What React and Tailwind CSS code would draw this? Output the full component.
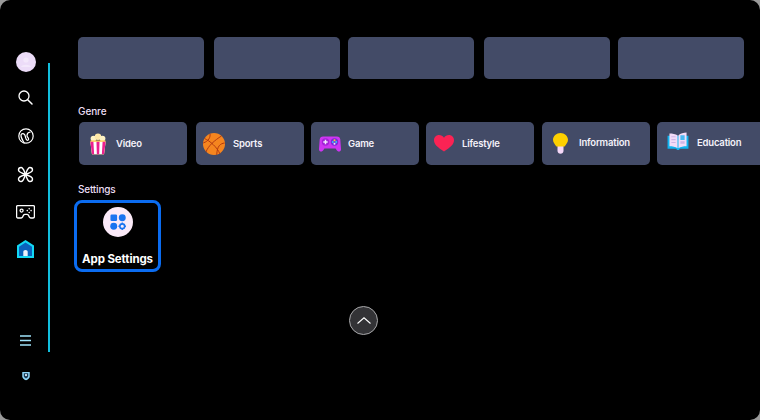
const topCards = ['w-[126px] mr-[10px]', 'w-[126px] mr-[8px]', 'w-[126px] mr-[10px]', 'w-[126px] mr-[8px]', 'w-[126px]'];

const Avatar = () => (
  <svg width="20" height="20" viewBox="0 0 20 20">
    <circle cx="10" cy="10" r="10" fill="#ecdcf8" />
    <circle cx="10" cy="8" r="2.6" fill="#f3e8fb" />
    <path d="M5 15c1-3 9-3 10 0z" fill="#f3e8fb" />
  </svg>
);

const SearchIcon = () => (
  <svg width="15" height="15" viewBox="0 0 15 15" fill="none" stroke="#fff" strokeWidth="1.3" strokeLinecap="round">
    <circle cx="6" cy="6" r="5" />
    <path d="M9.700 9.700 14 14" strokeWidth="1.500" />
  </svg>
);

const GlobeIcon = () => (
  <svg width="16" height="16" viewBox="0 0 16 16" fill="none" stroke="#fff" strokeWidth="1.200" strokeLinecap="round">
    <circle cx="8" cy="8" r="7.200" />
    <path d="M6.200 15C4.600 12 2.600 9.500 3 7c.4-1.800 2.600-1.800 3.600-.3C7.700 8.300 7.500 11 8.800 12c1.200.8 2.300-.4 1.600-1.700-.6-1.100-1.400-1.500-1.400-2.900 0-1.800 1.700-3.200 3.200-3.400" />
  </svg>
);

const FlowerIcon = () => (
  <svg width="17" height="17" viewBox="0 0 18 18" fill="none" stroke="#fff" strokeWidth="1.500" strokeLinejoin="round">
    <path d="M9 9C7.600 5.500 6.800 1.600 4.300 1.600 2.600 1.600 1.600 2.800 1.600 4.300 1.600 6.800 5.500 7.600 9 9Z" />
    <path d="M9 9c1.400-3.500 2.200-7.400 4.700-7.400 1.700 0 2.700 1.200 2.700 2.700C16.400 6.800 12.500 7.600 9 9Z" />
    <path d="M9 9c-1.400 3.500-2.200 7.400-4.700 7.400-1.700 0-2.700-1.200-2.700-2.700C1.600 11.200 5.500 10.400 9 9Z" />
    <path d="M9 9c1.400 3.500 2.200 7.400 4.700 7.400 1.700 0 2.700-1.200 2.700-2.700C16.400 11.200 12.500 10.400 9 9Z" />
  </svg>
);

const GamepadIcon = () => (
  <svg width="19" height="14" viewBox="0 0 19 14" fill="none" stroke="#fff" strokeWidth="1.300" strokeLinejoin="round">
    <path d="M1.600.7h15.800c.6 0 1 .4 1 1v9.900c0 .8-.5 1.400-1.300 1.400h-2.400c-.6 0-1-.3-1.300-.8l-1-2.100c-.3-.5-.8-.8-1.400-.8H8.900c-.6 0-1.100.3-1.400.8l-1 2.100c-.3.5-.7.8-1.300.8H1.900C1.100 13 .6 12.400.6 11.600V1.700c0-.6.4-1 1-1Z" />
    <circle cx="5.600" cy="5.600" r="1.500" />
    <g fill="#fff" stroke="none">
      <circle cx="13.200" cy="3.700" r=".8" />
      <circle cx="13.200" cy="7.500" r=".8" />
      <circle cx="11.300" cy="5.600" r=".8" />
      <circle cx="15.100" cy="5.600" r=".8" />
    </g>
  </svg>
);

const HomeIcon = () => (
  <svg width="17" height="18" viewBox="0 0 17 18">
    <path d="M8.500 0 17 5.500V18H0V5.500Z" fill="#12d8f5" />
    <path d="M8.500 2.500 15 6.700V16H2V6.700Z" fill="#0b62bd" />
    <path d="M6.300 16v-4.200c0-1 1-1.800 2.200-1.800s2.200.8 2.200 1.800V16Z" fill="#eef2fb" />
  </svg>
);

const MenuIcon = () => (
  <svg width="11" height="11" viewBox="0 0 11 11" stroke="#a0e4fa" strokeWidth="1.300" className="block">
    <path d="M0 1h11M0 5.500h11M0 10h11" />
  </svg>
);

const ShieldIcon = () => (
  <svg width="8" height="10" viewBox="0 0 9 10" className="block">
    <path d="M.3.600h8.400v4.600c0 2.400-2.200 3.800-4.200 4.500C2.500 9 .3 7.600.3 5.200Z" fill="#8fd6f8" />
    <path d="M2 2h5v3c0 1.400-1.300 2.300-2.500 2.800C3.300 7.300 2 6.400 2 5Z" fill="#1a3a55" />
    <circle cx="4.500" cy="4" r="1.200" fill="#e8f6ff" />
  </svg>
);

const Popcorn = () => (
  <svg width="18" height="22" viewBox="0 0 20 24">
    <circle cx="5" cy="6" r="3.200" fill="#fff3c4" />
    <circle cx="10" cy="4" r="3.600" fill="#ffe9a8" />
    <circle cx="15" cy="6" r="3.200" fill="#fff3c4" />
    <path d="M1.500 8h17l-1.800 15.500H3.300Z" fill="#ffcb3d" />
    <path d="M1.500 9.500h17l-1.800 14H3.300Z" fill="#fff" />
    <path d="M1.500 9.500h3.400l.8 14H3.300ZM8.300 9.500h3.400l-.4 14H8.700ZM15.100 9.500h3.400l-1.800 14h-2.400Z" fill="#ec1f8e" />
  </svg>
);

const Basketball = () => (
  <svg width="22" height="22" viewBox="0 0 22 22" fill="none">
    <circle cx="11" cy="11" r="11" fill="#f5851f" />
    <g stroke="#b23a12" strokeWidth="1">
      <path d="M1.500 5.500C7 8 14 14 17 21" />
      <path d="M18.500 3C12 7 5 13 3 19" />
      <path d="M7 .8C7.500 4 6 8 .2 10" />
      <path d="M21.700 10c-4.500.5-7.500 3-8 11.800" />
    </g>
  </svg>
);

const GameIcon = () => (
  <svg width="22" height="16" viewBox="0 0 22 16">
    <path d="M4 .5h14c2 0 3 1.200 3.300 3L22 13c.1 1.800-1 2.500-2 2.500-1.200 0-1.800-.6-2.600-1.800l-.8-1.200H5.400l-.8 1.200C3.800 14.900 3.200 15.500 2 15.500c-1 0-2.100-.7-2-2.500l.7-9.500C1 1.700 2 .5 4 .5Z" fill="#cf35f2" />
    <circle cx="6.500" cy="6" r="3.700" fill="#a322d6" />
    <circle cx="15.500" cy="6" r="3.700" fill="#7b2bd6" />
    <path d="M6.500 3.800v4.400M4.300 6h4.400" stroke="#f3e6ff" strokeWidth="1.400" />
    <circle cx="15.500" cy="4.300" r="1" fill="#ffd21f" />
    <circle cx="13.800" cy="6" r="1" fill="#35c7f5" />
    <circle cx="17.200" cy="6" r="1" fill="#35c7f5" />
    <circle cx="15.500" cy="7.700" r="1" fill="#f3e6ff" />
  </svg>
);

const Heart = () => (
  <svg width="20" height="17" viewBox="0 0 20 17">
    <path d="M10 16.500C4 12.500 0 9.500 0 5.200 0 2.200 2.300 0 5 0c2.200 0 3.800 1 5 2.700C11.200 1 12.800 0 15 0c2.700 0 5 2.200 5 5.200 0 4.300-4 7.300-10 11.300Z" fill="#fb2354" />
  </svg>
);

const Bulb = () => (
  <svg width="15" height="21" viewBox="0 0 15 21">
    <path d="M4.500 13h6v5c0 1.600-1.300 2.800-3 2.800s-3-1.200-3-2.800Z" fill="#f5d8f8" />
    <path d="M7.500 0C11.600 0 15 3 15 6.800c0 2.900-2 4.500-3.400 6.700H3.400C2 11.300 0 9.700 0 6.800 0 3 3.400 0 7.500 0Z" fill="#fdd000" />
  </svg>
);

const Book = () => (
  <svg width="22" height="19" viewBox="0 0 22 20">
    <path d="M0 4h22v13.500h-9l-1 1.500h-2l-1-1.500H0Z" fill="#10b4f0" />
    <path d="M2 1.500c3 0 6.500.4 8.500 2V17C8.500 15.500 5 15 2 15Z" fill="#f2dcf8" />
    <path d="M20 .5c-3 0-6.500 1-8.500 3V17c2-1.500 5.500-2 8.500-2Z" fill="#f2dcf8" />
    <path d="M13.500 3.500H18v5h-4.500Z" fill="#48b8f2" />
    <path d="M4 5h4.500M4 8h4.500M4 11h4.500" stroke="#cfb6e6" strokeWidth="1.200" />
    <path d="M13.500 11h4.500" stroke="#cfb6e6" strokeWidth="2.500" />
  </svg>
);

const AppsIcon = () => (
  <svg width="16" height="16" viewBox="0 0 18 18" fill="#1a74f0">
    <rect x=".5" y=".5" width="7.500" height="7.500" rx="1.500" />
    <circle cx="13.800" cy="4.200" r="3.900" />
    <circle cx="4.200" cy="13.800" r="3.900" />
    <circle cx="13.800" cy="13.800" r="2.700" fill="none" stroke="#1a74f0" strokeWidth="1.800" />
    <path d="M13.800 9.500v1.600M13.800 16.500v1.400M9.500 13.800h1.600M16.500 13.800h1.400" stroke="#1a74f0" strokeWidth="1.500" />
  </svg>
);

const genres = [
  { label: 'Video', icon: <Popcorn />, box: 'w-[108px] mr-[9px]', iconBox: 'w-[18px] ml-[10px] mr-[9px]', shift: 'mt-[2px]' },
  { label: 'Sports', icon: <Basketball />, box: 'w-[108px] mr-[7px]', iconBox: 'w-[22px] ml-[7px] mr-[8px]', shift: 'mt-[2px]' },
  { label: 'Game', icon: <GameIcon />, box: 'w-[108px] mr-[7px]', iconBox: 'w-[22px] ml-[8px] mr-[7px]', shift: 'mt-[2px]' },
  { label: 'Lifestyle', icon: <Heart />, box: 'w-[108px] mr-[8px]', iconBox: 'w-[20px] ml-[8px] mr-[8px]', shift: 'mt-[2px]' },
  { label: 'Information', icon: <Bulb />, box: 'w-[108px] mr-[7px]', iconBox: 'w-[15px] ml-[11px] mr-[11px]', shift: '' },
  { label: 'Education', icon: <Book />, box: 'w-[108px]', iconBox: 'w-[22px] ml-[10px] mr-[8px] mb-[4px]', shift: 'mb-[1px]' },
];

const App = () => {
  return (
    <div className="w-[760px] h-[420px] bg-[#9a9a9a] overflow-hidden font-['Inter',sans-serif]">
      <div className="w-full h-full bg-black rounded-[10px] flex overflow-hidden">
        {/* Sidebar */}
        <div className="w-[74px] shrink-0 flex">
          <div className="w-[48px] pl-[3px] flex flex-col items-center">
            <div className="mt-[52px] mb-[18px] h-[20px]"><Avatar /></div>
            <div className="mb-[23px] h-[15px]"><SearchIcon /></div>
            <div className="mb-[22px] h-[16px]"><GlobeIcon /></div>
            <div className="mb-[22px] h-[17px]"><FlowerIcon /></div>
            <div className="mb-[21px] h-[14px]"><GamepadIcon /></div>
            <div className="h-[18px]"><HomeIcon /></div>
            <div className="mt-[77px] h-[11px]"><MenuIcon /></div>
            <div className="mt-[25px] h-[10px]"><ShieldIcon /></div>
          </div>
          <div className="w-[2px] h-[289px] mt-[63px] bg-[#12bedd]" />
        </div>

        {/* Main */}
        <div className="flex-1 min-w-0 flex flex-col overflow-hidden">
          <div className="flex pl-[4px] pt-[37px]">
            {topCards.map((cls, i) => (
              <div key={i} className={`${cls} h-[42px] shrink-0 rounded-[5px] bg-[#434b67]`} />
            ))}
          </div>

          <p className="ml-[4px] mt-[26px] text-[10px] leading-[12px] font-medium tracking-[-0.01em] text-[#ecdff5]">Genre</p>

          <div className="flex pl-[5px] mt-[5px]">
            {genres.map((g) => (
              <div key={g.label} className={`${g.box} h-[43px] shrink-0 rounded-[5px] bg-[#434b67] flex items-center`}>
                <div className={`${g.iconBox} flex justify-center shrink-0`}>{g.icon}</div>
                <span className={`${g.shift} text-[9.500px] font-semibold tracking-[-0.02em] text-[#f5f2fa]`}>{g.label}</span>
              </div>
            ))}
          </div>

          <p className="ml-[4px] mt-[18px] text-[10px] leading-[12px] font-medium tracking-[-0.02em] text-[#ecdff5]">Settings</p>

          <div className="mt-[5px] w-[87px] h-[72px] rounded-[8px] border-[3px] border-[#0b6cf0] flex flex-col items-center pt-[4px]">
            <div className="w-[30px] h-[30px] rounded-full bg-[#fbeaf8] flex items-center justify-center">
              <AppsIcon />
            </div>
            <span className="mt-[14px] text-[11.500px] leading-[16px] font-bold tracking-[-0.01em] text-white whitespace-nowrap">App Settings</span>
          </div>

          <div className="ml-[275px] mt-[34px] w-[29px] h-[29px] rounded-full bg-[#333336] border border-[#a8a8aa] flex items-center justify-center">
            <svg width="14" height="7" viewBox="0 0 14 7" fill="none" stroke="#fff" strokeWidth="1.100">
              <path d="M.5 6.500 7 .8l6.500 5.700" />
            </svg>
          </div>
        </div>
      </div>
    </div>
  );
};

export default App;
